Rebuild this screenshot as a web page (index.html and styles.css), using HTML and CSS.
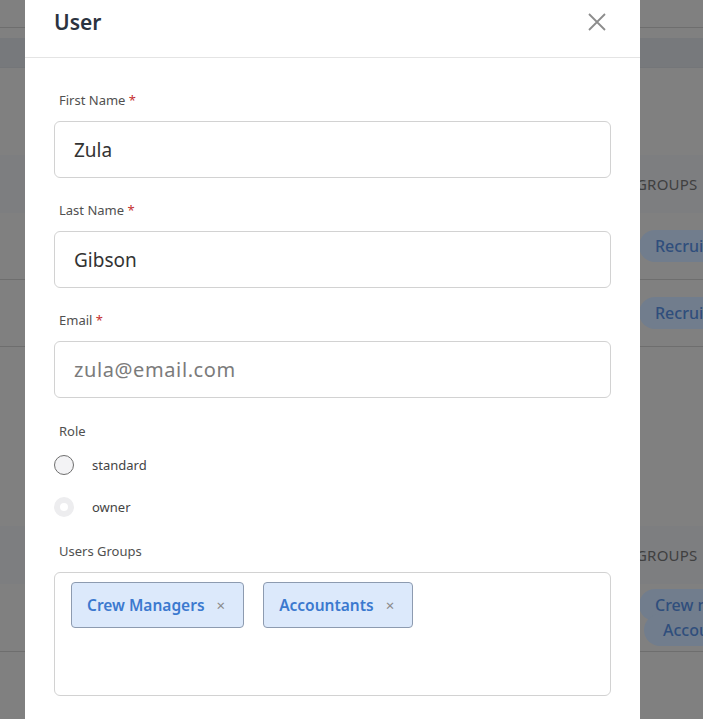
FILE: index.html
```html
<!DOCTYPE html>
<html>
<head>
<meta charset="utf-8">
<link rel="stylesheet" href="styles.css">
</head>
<body>
<div class="page">
  <div class="topbar"></div>
  <div class="gap-a"></div>
  <div class="band"></div>
  <div class="gap-b"></div>
  <div class="thead"><span class="th">GROUPS</span></div>
  <div class="trow"><span class="pill">Recruiters</span></div>
  <div class="trow"><span class="pill">Recruiters</span></div>
  <div class="gap-c"></div>
  <div class="thead"><span class="th">GROUPS</span></div>
  <div class="trow trow-tall">
    <span class="pill">Crew managers</span>
    <span class="pill pill-shift">Accountants</span>
  </div>
</div>

<div class="modal">
  <div class="modal-header">
    <h2 class="modal-title">User</h2>
    <button class="close" aria-label="Close">
      <svg width="18" height="18" viewBox="0 0 18 18"><path d="M1 1L17 17M17 1L1 17" stroke="#8c8c8c" stroke-width="1.8" fill="none"/></svg>
    </button>
  </div>
  <div class="modal-body">
    <div class="field">
      <div class="label">First Name <span class="req">*</span></div>
      <div class="input">Zula</div>
    </div>
    <div class="field">
      <div class="label">Last Name <span class="req">*</span></div>
      <div class="input">Gibson</div>
    </div>
    <div class="field field-email">
      <div class="label">Email <span class="req">*</span></div>
      <div class="input placeholder">zula@email.com</div>
    </div>
    <div class="field role">
      <div class="label">Role</div>
      <div class="radio-row"><span class="radio"></span><span class="radio-text">standard</span></div>
      <div class="radio-row"><span class="radio radio-disabled"></span><span class="radio-text">owner</span></div>
    </div>
    <div class="field">
      <div class="label">Users Groups</div>
      <div class="tagbox">
        <span class="tag">Crew Managers <span class="tag-x">×</span></span>
        <span class="tag">Accountants <span class="tag-x">×</span></span>
      </div>
    </div>
  </div>
</div>
</body>
</html>
```

FILE: styles.css
```css
* { box-sizing: border-box; }
html, body { margin: 0; padding: 0; height: 100%; overflow: hidden; }
body {
  font-family: "Noto Sans", "Open Sans", sans-serif;
  background: #808080;
}

/* background page (dimmed) */
.page { width: 703px; }
.topbar { height: 28px; border-bottom: 1px solid #6e6e6e; }
.gap-a { height: 10px; }
.band { height: 30px; background: #77797c; border-bottom: 1px solid #747679; }
.gap-b { height: 87px; }
.thead {
  height: 58px;
  background: #7d7e80;
  display: flex;
  align-items: center;
  padding-left: 636px;
}
.th { color: #404040; font-size: 15px; letter-spacing: 0.2px; }
.trow {
  height: 67px;
  border-bottom: 1px solid #6e6e6e;
  display: flex;
  align-items: center;
  padding-left: 639px;
}
.trow-tall {
  height: 68px;
  flex-direction: column;
  align-items: flex-start;
  justify-content: center;
}
.gap-c { height: 179px; }
.pill {
  background: #717d8d;
  color: #2f4e7c;
  font-size: 16px;
  font-weight: 500;
  padding: 5px 16px;
  border-radius: 16px;
  white-space: nowrap;
}
.pill-shift { margin-left: 5px; margin-top: -7px; padding-left: 19px; }

/* modal */
.modal {
  position: absolute;
  left: 25px;
  top: 0;
  width: 615px;
  height: 760px;
  background: #fff;
}
.modal-header {
  height: 58px;
  border-bottom: 1px solid #e4e4e4;
  display: flex;
  align-items: center;
  justify-content: space-between;
  padding: 0 34px 0 29px;
}
.modal-title {
  margin: 0;
  font-size: 21px;
  font-weight: 600;
  color: #2b3340;
  margin-top: -13px;
}
.close {
  border: 0;
  background: none;
  padding: 0;
  margin-top: -14px;
  width: 18px;
  height: 18px;
  display: flex;
}
.modal-body { padding: 32px 29px 0 29px; }
.field { margin-bottom: 22px; }
.field-email { margin-bottom: 23px; }
.label {
  height: 20px;
  line-height: 20px;
  font-size: 13px;
  color: #505050;
  padding-left: 5px;
  margin-bottom: 11px;
}
.req { color: #c53030; }
.input {
  height: 57px;
  border: 1px solid #d2d2d2;
  border-radius: 6px;
  display: flex;
  align-items: center;
  padding-left: 19px;
  font-size: 19px;
  color: #333;
}
.input.placeholder { color: #7b7b7b; font-size: 20px; letter-spacing: 0.6px; }
.role { margin-bottom: 22px; }
.role .label { margin-bottom: 12px; }
.radio-row {
  height: 24px;
  display: flex;
  align-items: center;
  margin-bottom: 18px;
}
.radio-row:last-child { margin-bottom: 0; }
.radio {
  width: 20px;
  height: 20px;
  border-radius: 50%;
  border: 1px solid #6e6e6e;
  background: #f3f3f5;
  margin-right: 18px;
  flex: none;
}
.radio-disabled {
  border: 6px solid #ededef;
  background: #fff;
}
.radio-text { font-size: 13px; color: #444; }
.tagbox {
  height: 124px;
  border: 1px solid #d2d2d2;
  border-radius: 6px;
  padding: 9px 16px;
  display: flex;
  align-items: flex-start;
  gap: 19px;
}
.tag {
  height: 46px;
  display: flex;
  align-items: center;
  background: #dce9fb;
  border: 1px solid #8d9bb0;
  border-radius: 4px;
  padding: 0 18px 0 15px;
  color: #3b79cf;
  font-size: 15.5px;
  font-weight: 600;
}
.tag-x {
  color: #8a8a8a;
  font-weight: 400;
  font-size: 15px;
  margin-left: 12px;
}
```
